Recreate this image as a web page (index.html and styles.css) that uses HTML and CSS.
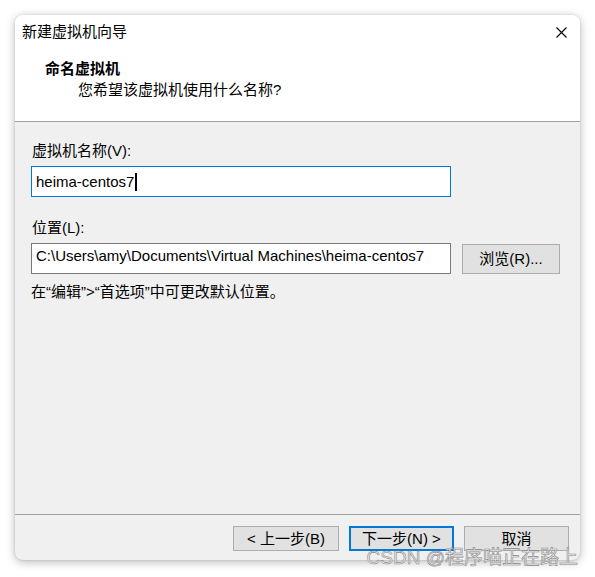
FILE: index.html
```html
<!DOCTYPE html>
<html lang="zh">
<head>
<meta charset="utf-8">
<title>新建虚拟机向导</title>
<link rel="stylesheet" href="styles.css">
</head>
<body>
<div class="window">
  <div class="header">
    <div class="titlebar">
      <span class="title">新建虚拟机向导</span>
      <svg class="close" width="11" height="11" viewBox="0 0 11 11"><path d="M0.5 0.5 L10.5 10.5 M10.5 0.5 L0.5 10.5" stroke="#000" stroke-width="1.1" fill="none"/></svg>
    </div>
    <div class="heading">命名虚拟机</div>
    <div class="subheading">您希望该虚拟机使用什么名称?</div>
  </div>
  <div class="content">
    <div class="label">虚拟机名称(V):</div>
    <div class="input focused"><span>heima-centos7</span><span class="caret"></span></div>
    <div class="label second">位置(L):</div>
    <div class="row">
      <div class="input path">C:\Users\amy\Documents\Virtual Machines\heima-centos7</div>
      <div class="btn browse">浏览(R)...</div>
    </div>
    <div class="hint">在“编辑”&gt;“首选项”中可更改默认位置。</div>
  </div>
  <div class="footer">
    <div class="btn">&lt; 上一步(B)</div>
    <div class="btn default">下一步(N) &gt;</div>
    <div class="btn cancel">取消</div>
  </div>
</div>
<div class="watermark">CSDN @程序喵正在路上</div>
</body>
</html>
```
FILE: styles.css
```css
html, body {
  margin: 0;
  padding: 0;
  background: #ffffff;
}
body {
  position: relative;
  width: 595px;
  height: 577px;
  overflow: hidden;
  font-family: "Liberation Sans", "Noto Sans CJK SC", sans-serif;
  font-size: 15px;
  color: #000;
}
.window {
  margin: 15px 0 0 15px;
  width: 565px;
  height: 545px;
  border-radius: 8px;
  background: #f0f0f0;
  box-shadow: 0 2px 10px rgba(0,0,0,0.28), 0 0 2px rgba(0,0,0,0.15);
  display: flex;
  flex-direction: column;
}
.header {
  background: #fff;
  height: 107px;
  border-bottom: 1px solid #a0a0a0;
  border-radius: 8px 8px 0 0;
  box-sizing: border-box;
}
.titlebar {
  height: 34px;
  display: flex;
  align-items: center;
  justify-content: space-between;
  padding: 0 13px 0 7px;
}
.title {
  line-height: 20px;
}
.close {
  display: block;
}
.heading {
  font-weight: bold;
  margin: 10px 0 0 30px;
  line-height: 20px;
}
.subheading {
  margin: 1px 0 0 63px;
  line-height: 20px;
}
.content {
  flex: 1;
  padding: 19px 0 0 16px;
  border-bottom: 1px solid #a0a0a0;
}
.label {
  line-height: 20px;
  margin-left: 1px;
}
.label.second {
  margin-top: 21px;
}
.input {
  box-sizing: border-box;
  width: 420px;
  height: 31px;
  background: #fff;
  border: 1px solid #7a7a7a;
  padding: 0 0 0 4px;
  display: flex;
  align-items: center;
  line-height: 20px;
  white-space: nowrap;
  margin-top: 5px;
}
.input.focused {
  border-color: #0078d7;
}
.caret {
  display: inline-block;
  width: 2px;
  height: 18px;
  background: #000;
  margin-left: 1px;
}
.input.path {
  padding-bottom: 5px;
}
.row {
  display: flex;
  align-items: center;
  gap: 11px;
}
.btn {
  box-sizing: border-box;
  height: 25px;
  background: #e1e1e1;
  border: 1px solid #adadad;
  display: flex;
  align-items: center;
  justify-content: center;
  line-height: 20px;
  white-space: nowrap;
}
.btn.browse {
  width: 98px;
  height: 30px;
  margin-top: 6px;
}
.hint {
  margin-top: 8px;
  line-height: 20px;
}
.footer {
  height: 45px;
  display: flex;
  align-items: flex-start;
  justify-content: flex-end;
  gap: 10px;
  padding: 11px 11px 0 0;
  box-sizing: border-box;
}
.footer .btn {
  width: 106px;
}
.footer .btn.default {
  width: 105px;
  border: 2px solid #0078d7;
}
.footer .btn.cancel {
  width: 105px;
}
.watermark {
  position: absolute;
  right: 17px;
  top: 546px;
  font-family: "Liberation Sans", "Noto Sans CJK SC", sans-serif;
  font-size: 19px;
  color: #ececec;
  -webkit-text-stroke: 0.6px #8a8a8a;
  line-height: 23px;
  white-space: nowrap;
}
```
